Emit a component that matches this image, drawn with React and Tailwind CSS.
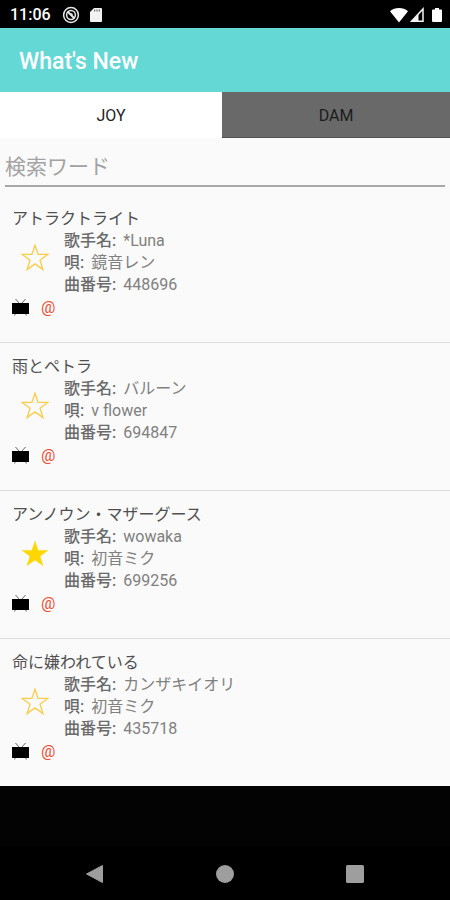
import React from "react";

const songs = [
  { title: "アトラクトライト", artist: "*Luna", vocal: "鏡音レン", number: "448696", starred: false },
  { title: "雨とペトラ", artist: "バルーン", vocal: "v flower", number: "694847", starred: false },
  { title: "アンノウン・マザーグース", artist: "wowaka", vocal: "初音ミク", number: "699256", starred: true },
  { title: "命に嫌われている", artist: "カンザキイオリ", vocal: "初音ミク", number: "435718", starred: false },
];

function StatusBar() {
  return (
    <div className="flex h-7 items-center bg-black pt-px pr-2 pl-[10px] text-white">
      <span className="text-[16px] leading-5 font-medium">11:06</span>
      <svg className="ml-[11px] h-[18px] w-[18px]" viewBox="0 0 18 18" fill="none" stroke="#e8e8e8" aria-hidden="true">
        <circle cx="9" cy="9" r="7.400" strokeWidth="1.500" />
        <circle cx="9" cy="9" r="4.400" strokeWidth="1.500" />
        <path d="M5.500 5.500 12.500 12.500" strokeWidth="2" />
        <path d="M9 7.500 10.500 9" strokeWidth="1.500" />
      </svg>
      <svg className="ml-[10px] h-4 w-3" viewBox="0 0 12 16" aria-hidden="true">
        <path d="M4 1h7a1 1 0 0 1 1 1v12a1 1 0 0 1-1 1H1a1 1 0 0 1-1-1V5z" fill="#f2f2f2" />
        <path d="M4.700 2.500v2M7 2.500v2M9.300 2.500v2" stroke="#555" strokeWidth="1" />
      </svg>
      <div className="ml-auto flex items-center">
        <svg className="h-4 w-[18px]" viewBox="0 0 18 16" aria-hidden="true">
          <path d="M0 4.200C2.500 2 5.500 1 9 1s6.500 1 9 3.200L9 15.500z" fill="#fff" />
        </svg>
        <svg className="ml-[2px] h-4 w-[14px]" viewBox="0 0 14 16" aria-hidden="true">
          <path d="M1.500 14.200 13 2v12.200z" fill="none" stroke="#f4f4f4" strokeWidth="1.500" />
          <path d="M1.500 14.500 8.500 7v7.500z" fill="#f4f4f4" />
        </svg>
        <svg className="ml-2 h-4 w-[10px]" viewBox="0 0 10 16" aria-hidden="true">
          <path d="M3 1h4v1.500h2a1 1 0 0 1 1 1V14a1 1 0 0 1-1 1H1a1 1 0 0 1-1-1V3.500a1 1 0 0 1 1-1h2z" fill="#fff" />
        </svg>
      </div>
    </div>
  );
}

function Star({ filled }) {
  return (
    <svg className="h-7 w-7" viewBox="0 0 28 28" aria-hidden="true">
      <path
        d="M14 1.200 17.100 10.400H26.800L19 16.200 21.900 25.600 14 19.900 6.100 25.600 9 16.200 1.200 10.400H10.900Z"
        fill={filled ? "#ffd700" : "none"}
        stroke={filled ? "#ffd700" : "#f9cd45"}
        strokeWidth={filled ? "0.500" : "1.300"}
      />
    </svg>
  );
}

function Detail({ label, value }) {
  return (
    <div className="flex gap-[7px]">
      <dt className="font-medium text-[#6a6a6a]">{label}:</dt>
      <dd className="text-[#808080]">{value}</dd>
    </div>
  );
}

function Song({ song }) {
  return (
    <li className="px-3 pt-[13px] pb-[23px]">
      <h2 className="text-[16px] leading-[22px] text-[#505050]">{song.title}</h2>
      <div className="flex items-start">
        <button
          type="button"
          aria-label="お気に入り"
          aria-pressed={song.starred}
          className="flex w-[52px] justify-end pt-[14px] pr-[15px]"
        >
          <Star filled={song.starred} />
        </button>
        <dl className="text-[16px] leading-[22px]">
          <Detail label="歌手名" value={song.artist} />
          <Detail label="唄" value={song.vocal} />
          <Detail label="曲番号" value={song.number} />
        </dl>
      </div>
      <div className="flex h-[23px] items-center gap-3">
        <svg className="h-[18px] w-[17px]" viewBox="0 0 17 18" aria-hidden="true">
          <path d="M3.500 0 7.500 4.500M13.500 0 9.500 4.500M4 14 2.500 16.500M13 14 14.500 16.500" stroke="#666" strokeWidth="1" />
          <path d="M0 4h17v11H0z" fill="#000" />
        </svg>
        <span className="text-[16px] leading-5 text-[#f04a34]">@</span>
      </div>
    </li>
  );
}

export default function App() {
  return (
    <div className="flex min-h-screen flex-col bg-[#030303] font-[Roboto,'Noto_Sans_CJK_JP',sans-serif]">
      <StatusBar />
      <header className="flex h-16 items-center bg-[#64d8d5] px-[19px] pt-1">
        <h1 className="text-[23px] leading-7 font-medium text-white">What's New</h1>
      </header>
      <main className="bg-[#fafafa]">
        <div role="tablist" className="grid h-[46px] grid-cols-[222fr_228fr] text-[16px]">
          <button type="button" role="tab" aria-selected="true" className="bg-white pt-[2px] text-[#222]">
            JOY
          </button>
          <button
            type="button"
            role="tab"
            aria-selected="false"
            className="border-b border-[#505050] bg-[#696969] pt-[2px] text-[#1c1c1c]"
          >
            DAM
          </button>
        </div>
        <div className="px-[5px] pt-[9px] pb-2">
          <input
            type="text"
            aria-label="検索ワード"
            placeholder="検索ワード"
            className="block h-10 w-full border-b-2 border-[#a8a8a8] bg-transparent pt-[2px] text-[21px] text-[#555] outline-none placeholder:text-[#a3a3a3]"
          />
        </div>
        <ul className="divide-y divide-[#dcdcdc]">
          {songs.map((song) => (
            <Song key={song.number} song={song} />
          ))}
        </ul>
      </main>
      <nav className="mt-auto flex h-[53px] items-center justify-center gap-[110px] bg-black">
        <button type="button" aria-label="戻る">
          <svg className="h-5 w-5" viewBox="0 0 20 20" aria-hidden="true">
            <path d="M17.500 1.500v17L1.500 10z" fill="#9e9e9e" stroke="#9e9e9e" strokeLinejoin="round" />
          </svg>
        </button>
        <button type="button" aria-label="ホーム">
          <svg className="h-5 w-5" viewBox="0 0 20 20" aria-hidden="true">
            <circle cx="10" cy="10" r="9" fill="#9e9e9e" />
          </svg>
        </button>
        <button type="button" aria-label="履歴">
          <svg className="h-5 w-5" viewBox="0 0 20 20" aria-hidden="true">
            <rect x="1" y="1" width="18" height="18" rx="1.500" fill="#9e9e9e" />
          </svg>
        </button>
      </nav>
    </div>
  );
}
